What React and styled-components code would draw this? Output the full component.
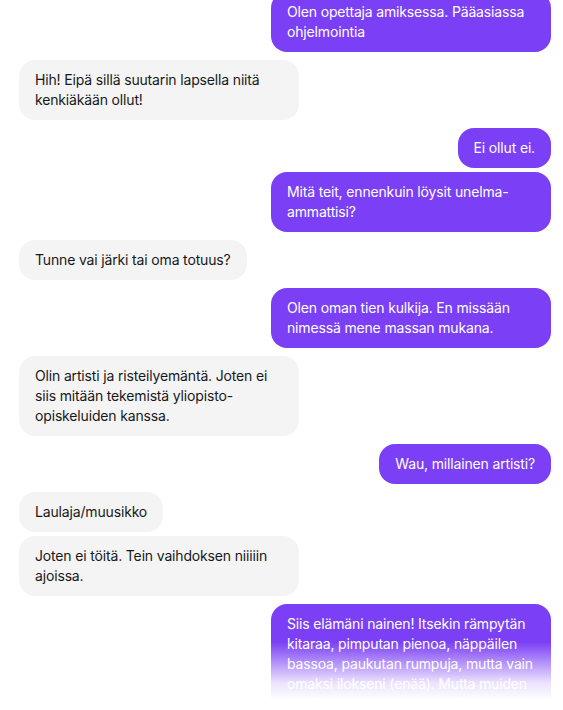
import React from 'react';
import styled, {createGlobalStyle} from 'styled-components';

const GlobalStyle = createGlobalStyle`
  html, body {
    margin: 0;
    padding: 0;
    background: #ffffff;
  }
  body {
    font-family: Inter, "Noto Sans", sans-serif;
    -webkit-font-smoothing: antialiased;
  }
`;

const ChatWindow = styled.div`
  position: relative;
  width: 563px;
  height: 710px;
  overflow: hidden;
  background: #ffffff;
`;

const MessageList = styled.div`
  display: flex;
  flex-direction: column;
  margin-top: -8px;
  padding: 0 12px 0 19px;
`;

const Group = styled.div`
  display: flex;
  flex-direction: column;
  align-items: ${props => (props.$mine ? 'flex-end' : 'flex-start')};
  gap: 4px;
  margin-bottom: 8px;
`;

const Bubble = styled.div`
  box-sizing: border-box;
  max-width: 280px;
  padding: 10px 16px;
  border-radius: 16px;
  font-size: 14px;
  line-height: 20px;
  letter-spacing: -0.16px;
  background: ${props => (props.$mine ? '#7b3ff6' : '#f4f4f5')};
  color: ${props => (props.$mine ? '#ffffff' : '#18181b')};
`;

const Fade = styled.div`
  position: absolute;
  left: 0;
  right: 0;
  bottom: 0;
  height: 68px;
  background: linear-gradient(to bottom, rgba(255, 255, 255, 0) 0%, rgba(255, 255, 255, 0.85) 60%, #ffffff 85%);
  pointer-events: none;
`;

const conversation = [
  {mine: true, texts: ['Olen opettaja amiksessa. Pääasiassa ohjelmointia']},
  {mine: false, texts: ['Hih! Eipä sillä suutarin lapsella niitä kenkiäkään ollut!']},
  {mine: true, texts: ['Ei ollut ei.', 'Mitä teit, ennenkuin löysit unelma-ammattisi?']},
  {mine: false, texts: ['Tunne vai järki tai oma totuus?']},
  {mine: true, texts: ['Olen oman tien kulkija. En missään nimessä mene massan mukana.']},
  {mine: false, texts: ['Olin artisti ja risteilyemäntä. Joten ei siis mitään tekemistä yliopisto-opiskeluiden kanssa.']},
  {mine: true, texts: ['Wau, millainen artisti?']},
  {mine: false, texts: ['Laulaja/muusikko', 'Joten ei töitä. Tein vaihdoksen niiiiin ajoissa.']},
  {
    mine: true,
    texts: [
      'Siis elämäni nainen! Itsekin rämpytän kitaraa, pimputan pienoa, näppäilen bassoa, paukutan rumpuja, mutta vain omaksi ilokseni (enää). Mutta muiden musiikkia kuuntelen mielelläni.',
    ],
  },
];

const App = () => {
  return (
    <>
      <GlobalStyle />
      <ChatWindow>
        <MessageList>
          {conversation.map((group, i) => (
            <Group key={i} $mine={group.mine}>
              {group.texts.map((text, j) => (
                <Bubble key={j} $mine={group.mine}>{text}</Bubble>
              ))}
            </Group>
          ))}
        </MessageList>
        <Fade />
      </ChatWindow>
    </>
  );
};

export default App;
